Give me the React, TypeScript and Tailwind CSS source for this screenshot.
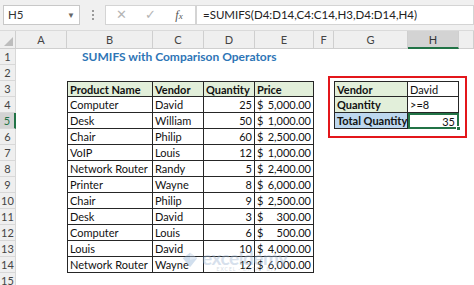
import { Fragment } from "react";

const products: [string, string, number, string][] = [
  ["Computer", "David", 25, "5,000.00"],
  ["Desk", "William", 50, "1,000.00"],
  ["Chair", "Philip", 60, "2,500.00"],
  ["VoIP", "Louis", 12, "1,000.00"],
  ["Network Router", "Randy", 5, "2,400.00"],
  ["Printer", "Wayne", 8, "6,000.00"],
  ["Chair", "Philip", 9, "2,500.00"],
  ["Desk", "David", 3, "300.00"],
  ["Computer", "Louis", 6, "500.00"],
  ["Louis", "David", 10, "4,000.00"],
  ["Network Router", "Wayne", 12, "6,000.00"],
];

const letters = ["A", "B", "C", "D", "E", "F", "G", "H", ""];

const TopBar = () => {
  return (
    <div className="h-[31px] bg-[#f0f0f0] flex items-center pl-[3px] border-b border-[#dadada]">
      <div className="w-[77px] h-[20px] bg-white border border-[#c8c8c8] flex items-center justify-between px-[4px] text-[11.5px] text-[#333]">
        <span>H5</span>
        <span className="text-[8px] text-[#666]">▼</span>
      </div>
      <div className="w-[25px] flex flex-col items-center gap-[2px]">
        <span className="w-[2px] h-[2px] bg-[#9a9a9a]" />
        <span className="w-[2px] h-[2px] bg-[#9a9a9a]" />
        <span className="w-[2px] h-[2px] bg-[#9a9a9a]" />
      </div>
      <div className="w-[91px] h-[20px] bg-white border border-[#d4d4d4] flex items-center text-[#b5b5b5]">
        <span className="w-[30px] text-center text-[13px]">✕</span>
        <span className="w-[28px] text-center text-[13px]">✓</span>
        <span className="w-[30px] text-center text-[12px] italic text-[#555] font-['Liberation_Serif',serif]">
          f<span className="text-[9px]">x</span>
        </span>
      </div>
      <div className="flex-1 h-[20px] bg-white border border-[#d4d4d4] flex items-center pl-[6px] text-[11.5px] text-[#222]">
        =SUMIFS(D4:D14,C4:C14,H3,D4:D14,H4)
      </div>
    </div>
  );
};

const Sheet = () => {
  const cells = [];

  // column header row
  cells.push(
    <div key="corner" className="bg-[#efefef] border-r border-b border-[#cfcfcf] relative overflow-hidden">
      <div className="absolute right-[2px] bottom-[2px] w-0 h-0 border-l-[9px] border-l-transparent border-b-[9px] border-b-[#bdbdbd]" />
    </div>
  );
  letters.forEach((l, i) => {
    const sel = l === "H";
    cells.push(
      <div
        key={"h" + i}
        className={
          sel
            ? "bg-[#d3d3d3] border-r border-[#cfcfcf] border-b-2 border-b-[#217346] flex items-center justify-center text-[11px] text-[#333]"
            : "bg-[#efefef] border-r border-b border-[#cfcfcf] flex items-center justify-center text-[11px] text-[#444]"
        }
      >
        {l}
      </div>
    );
  });

  for (let r = 1; r <= 15; r++) {
    const selRow = r === 5;
    cells.push(
      <div
        key={"r" + r}
        className={
          selRow
            ? "bg-[#d3d3d3] border-r-2 border-r-[#217346] border-b border-b-[#d8d8d8] flex items-center justify-center text-[11px] text-[#217346]"
            : "bg-[#efefef] border-r border-b border-[#d8d8d8] flex items-center justify-center text-[11px] text-[#444]"
        }
      >
        {r}
      </div>
    );

    // column A
    cells.push(<div key={r + "A"} />);

    if (r === 1) {
      cells.push(
        <div key="title" className="col-span-4 pl-[15px] flex items-center text-[12px] font-bold text-[#2e75b6] whitespace-nowrap">
          SUMIFS with Comparison Operators
        </div>
      );
    } else if (r === 2 || r === 15) {
      cells.push(<div key={r + "BE"} className="col-span-4" />);
    } else if (r === 3) {
      const hd = "bg-[#e2efda] border-t border-r border-b border-[#262626] flex items-center pl-[2px] font-bold whitespace-nowrap overflow-hidden";
      cells.push(
        <div key="3B" className={hd + " border-l"}>Product Name</div>,
        <div key="3C" className={hd}>Vendor</div>,
        <div key="3D" className={hd}>Quantity</div>,
        <div key="3E" className={hd}>Price</div>
      );
    } else {
      const p = products[r - 4];
      const c = "border-r border-b border-[#262626] flex items-center px-[2px] whitespace-nowrap";
      cells.push(
        <div key={r + "B"} className={c + " border-l"}>{p[0]}</div>,
        <div key={r + "C"} className={c}>{p[1]}</div>,
        <div key={r + "D"} className={c + " justify-end"}>{p[2]}</div>,
        <div key={r + "E"} className={c + " justify-between"}>
          <span>$</span>
          <span>{p[3]}</span>
        </div>
      );
    }

    // column F
    cells.push(<div key={r + "F"} />);

    // G, H
    const box = "border-r border-b border-[#262626] flex items-center px-[2px] whitespace-nowrap";
    if (r === 3) {
      cells.push(
        <div key="3G" className={box + " border-l border-t bg-[#e2efda] font-bold"}>Vendor</div>,
        <div key="3H" className={box + " border-t"}>David</div>
      );
    } else if (r === 4) {
      cells.push(
        <div key="4G" className={box + " border-l bg-[#e2efda] font-bold"}>Quantity</div>,
        <div key="4H" className={box}>&gt;=8</div>
      );
    } else if (r === 5) {
      cells.push(
        <div key="5G" className={box + " border-l bg-[#bdd7ee] font-bold"}>Total Quantity</div>,
        <div key="5H" className="relative border-2 border-[#217346] flex items-center justify-end pr-[2px]">
          35
          <span className="absolute right-[-4px] bottom-[-4px] w-[5px] h-[5px] bg-[#217346] border border-white" />
        </div>
      );
    } else {
      cells.push(<div key={r + "G"} />, <div key={r + "H"} />);
    }

    // column I
    cells.push(<div key={r + "I"} />);
  }

  return (
    <div className="grid grid-cols-[16px_51px_86px_51px_51px_59px_20px_74px_51px_15px] grid-rows-[18px_repeat(15,16px)] text-[11px] text-[#111] leading-none">
      {cells.map((c, i) => (
        <Fragment key={i}>{c}</Fragment>
      ))}
    </div>
  );
};

export default function App() {
  return (
    <div className="w-[474px] h-[285px] overflow-hidden bg-white relative font-['Lato',sans-serif]">
      <TopBar />
      <Sheet />
      {/* highlight box */}
      <div className="absolute left-[328px] top-[76px] w-[139px] h-[62px] border-2 border-[#e3161b] pointer-events-none" />
      {/* watermark */}
      <div className="absolute left-[181px] top-[248px] flex items-center gap-[3px] opacity-40 pointer-events-none">
        <svg width="18" height="18" viewBox="0 0 20 20">
          <path d="M10 2 L18 8 L10 18 L2 8 Z" fill="#8fb0d6" />
          <path d="M10 2 L18 8 L10 10 Z" fill="#b9cde6" />
        </svg>
        <div className="flex flex-col items-center leading-none">
          <span className="text-[19px] font-bold text-[#9cb4d2] tracking-tight">exceldemy</span>
          <span className="text-[5px] text-[#9aaabb] tracking-[1px]">EXCEL · DATA · BI</span>
        </div>
      </div>
    </div>
  );
}
